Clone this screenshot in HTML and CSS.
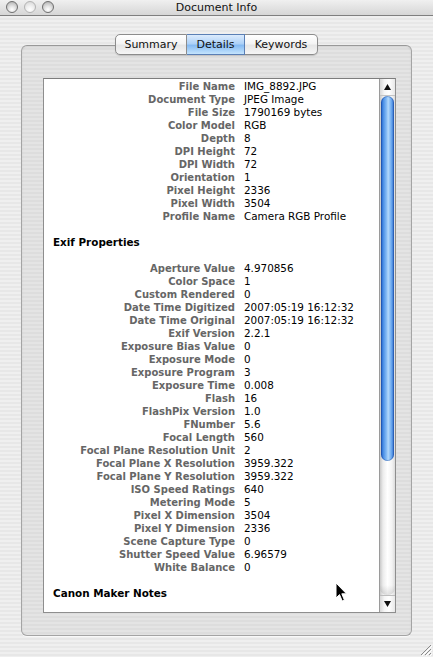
FILE: index.html
```html
<!DOCTYPE html>
<html>
<head>
<meta charset="utf-8">
<title>Document Info</title>
<link rel="stylesheet" href="styles.css">
</head>
<body>
<div class="window">
  <div class="titlebar">
    <div class="lights">
      <span class="light"></span>
      <span class="light off"></span>
      <span class="light"></span>
    </div>
    <div class="title">Document Info</div>
  </div>
  <div class="body">
    <div class="tabs">
      <span class="tab first">Summary</span>
      <span class="tab selected">Details</span>
      <span class="tab last">Keywords</span>
    </div>
    <div class="panel">
      <div class="listbox">
        <div class="content">
          <div class="props">
            <div class="k">File Name</div><div class="v">IMG_8892.JPG</div>
            <div class="k">Document Type</div><div class="v">JPEG Image</div>
            <div class="k">File Size</div><div class="v">1790169 bytes</div>
            <div class="k">Color Model</div><div class="v">RGB</div>
            <div class="k">Depth</div><div class="v">8</div>
            <div class="k">DPI Height</div><div class="v">72</div>
            <div class="k">DPI Width</div><div class="v">72</div>
            <div class="k">Orientation</div><div class="v">1</div>
            <div class="k">Pixel Height</div><div class="v">2336</div>
            <div class="k">Pixel Width</div><div class="v">3504</div>
            <div class="k">Profile Name</div><div class="v">Camera RGB Profile</div>
          </div>
          <div class="section">Exif Properties</div>
          <div class="props">
            <div class="k">Aperture Value</div><div class="v">4.970856</div>
            <div class="k">Color Space</div><div class="v">1</div>
            <div class="k">Custom Rendered</div><div class="v">0</div>
            <div class="k">Date Time Digitized</div><div class="v">2007:05:19 16:12:32</div>
            <div class="k">Date Time Original</div><div class="v">2007:05:19 16:12:32</div>
            <div class="k">Exif Version</div><div class="v">2.2.1</div>
            <div class="k">Exposure Bias Value</div><div class="v">0</div>
            <div class="k">Exposure Mode</div><div class="v">0</div>
            <div class="k">Exposure Program</div><div class="v">3</div>
            <div class="k">Exposure Time</div><div class="v">0.008</div>
            <div class="k">Flash</div><div class="v">16</div>
            <div class="k">FlashPix Version</div><div class="v">1.0</div>
            <div class="k">FNumber</div><div class="v">5.6</div>
            <div class="k">Focal Length</div><div class="v">560</div>
            <div class="k">Focal Plane Resolution Unit</div><div class="v">2</div>
            <div class="k">Focal Plane X Resolution</div><div class="v">3959.322</div>
            <div class="k">Focal Plane Y Resolution</div><div class="v">3959.322</div>
            <div class="k">ISO Speed Ratings</div><div class="v">640</div>
            <div class="k">Metering Mode</div><div class="v">5</div>
            <div class="k">Pixel X Dimension</div><div class="v">3504</div>
            <div class="k">Pixel Y Dimension</div><div class="v">2336</div>
            <div class="k">Scene Capture Type</div><div class="v">0</div>
            <div class="k">Shutter Speed Value</div><div class="v">6.96579</div>
            <div class="k">White Balance</div><div class="v">0</div>
          </div>
          <div class="section">Canon Maker Notes</div>
        </div>
        <div class="scrollbar">
          <div class="arrow up"><svg width="7" height="6" viewBox="0 0 7 6"><path d="M3.5 0 L7 6 L0 6 Z" fill="#111"/></svg></div>
          <div class="thumb"></div>
          <div class="track"></div>
          <div class="arrow down"><svg width="7" height="6" viewBox="0 0 7 6"><path d="M0 0 L7 0 L3.5 6 Z" fill="#111"/></svg></div>
        </div>
      </div>
    </div>
  </div>
  <svg class="grip" width="12" height="12" viewBox="0 0 12 12">
    <path d="M11 1 L1 11 M11 5 L5 11 M11 9 L9 11" stroke="#8a8a8a" stroke-width="1"/>
    <path d="M12 2 L2 12 M12 6 L6 12 M12 10 L10 12" stroke="#fff" stroke-width="1"/>
  </svg>
  <svg class="cursor" width="13" height="21" viewBox="0 0 13 21">
    <path d="M1 1 L1 16 L4.5 12.6 L7.2 19 L9.4 18 L6.8 11.8 L11.5 11.8 Z" fill="#000" stroke="#fff" stroke-width="1" stroke-linejoin="round"/>
  </svg>
</div>
</body>
</html>
```

FILE: styles.css
```css
html, body {
  margin: 0;
  padding: 0;
}
body {
  width: 433px;
  height: 657px;
  overflow: hidden;
  font-family: "DejaVu Sans", "Liberation Sans", sans-serif;
}
.window {
  position: relative;
  width: 433px;
  height: 657px;
  display: flex;
  flex-direction: column;
  background: repeating-linear-gradient(to bottom, #efefef 0 2px, #e7e7e7 2px 4px);
}
.titlebar {
  height: 15px;
  border-bottom: 1px solid #7f7f7f;
  background: linear-gradient(to bottom, #f0f0f0, #d6d6d6);
  position: relative;
  display: flex;
  align-items: center;
  justify-content: center;
}
.lights {
  position: absolute;
  left: 6px;
  top: 1px;
  display: flex;
  gap: 6px;
}
.light {
  width: 10px;
  height: 10px;
  border-radius: 50%;
  border: 1px solid #6f6f6f;
  background: radial-gradient(circle at 50% 75%, #ffffff 0, #e6e6e6 35%, #a9a9a9 100%);
}
.light.off {
  border-color: #b3b3b3;
  background: radial-gradient(circle at 50% 75%, #ffffff 0, #f0f0f0 40%, #d2d2d2 100%);
}
.title {
  font-size: 11px;
  color: #111;
  line-height: 15px;
}
.body {
  flex: 1;
  display: flex;
  flex-direction: column;
  align-items: center;
  padding-top: 18px;
}
.tabs {
  display: flex;
  height: 21px;
  position: relative;
  z-index: 2;
  margin-bottom: -10px;
  font-size: 11px;
  box-shadow: 0 1px 1px rgba(0,0,0,0.15);
  border-radius: 5px;
}
.tab {
  display: flex;
  align-items: center;
  justify-content: center;
  height: 19px;
  border: 1px solid #8c8c8c;
  border-left: none;
  background: linear-gradient(to bottom, #ffffff 0, #f4f4f4 45%, #e6e6e6 55%, #f6f6f6 100%);
  color: #111;
}
.tab.first {
  width: 70px;
  border-left: 1px solid #8c8c8c;
  border-radius: 5px 0 0 5px;
}
.tab.selected {
  width: 57px;
  border-color: #5a7fb5;
  background: linear-gradient(to bottom, #dcebfc 0, #aed2f8 45%, #86bbf3 55%, #c4e4fd 100%);
}
.tab.last {
  width: 72px;
  border-radius: 0 5px 5px 0;
}
.panel {
  box-sizing: border-box;
  width: 391px;
  height: 591px;
  border: 1px solid #a4a4a4;
  border-top-color: #999;
  border-radius: 6px;
  background: repeating-linear-gradient(to bottom, #e4e4e4 0 2px, #dddddd 2px 4px);
  box-shadow: inset 0 1px 2px rgba(0,0,0,0.08), 0 1px 0 rgba(255,255,255,0.6);
  padding: 32px 15px 0 21px;
}
.listbox {
  box-sizing: border-box;
  width: 353px;
  height: 535px;
  border: 1px solid #8e8e8e;
  border-top-color: #7d7d7d;
  background: #fff;
  display: flex;
  overflow: hidden;
}
.content {
  flex: 1;
  padding-top: 1px;
  font-size: 10.4px;
  line-height: 13px;
}
.props {
  display: grid;
  grid-template-columns: 191px 1fr;
  column-gap: 9px;
}
.k {
  text-align: right;
  font-weight: bold;
  font-size: 10px;
  color: #666;
  white-space: nowrap;
}
.v {
  color: #000;
  white-space: nowrap;
}
.section {
  font-weight: bold;
  font-size: 10.4px;
  color: #000;
  padding-left: 9px;
  margin: 13px 0;
}
.scrollbar {
  width: 15px;
  border-left: 1px solid #9a9a9a;
  display: flex;
  flex-direction: column;
  background: linear-gradient(to right, #c9c9c9 0, #ececec 20%, #ffffff 50%, #f3f3f3 80%, #dcdcdc 100%);
}
.arrow {
  height: 16px;
  display: flex;
  align-items: center;
  justify-content: center;
  background: linear-gradient(to right, #d8d8d8 0, #f6f6f6 30%, #ffffff 60%, #e8e8e8 100%);
}
.arrow.up {
  border-bottom: 1px solid #c4c4c4;
}
.arrow.down {
  border-top: 1px solid #bdbdbd;
}
.thumb {
  height: 365px;
  margin: 0 1px;
  border-radius: 7px;
  background: linear-gradient(to right, #1d5cc2 0, #4a8fe6 18%, #8cc0f6 45%, #b4d9fb 55%, #6aa8ef 80%, #2b68c9 100%);
  box-shadow: inset 0 0 0 1px rgba(20,60,140,0.35);
}
.track {
  flex: 1;
  background: linear-gradient(to bottom, rgba(0,0,0,0) 0, rgba(0,0,0,0) calc(100% - 10px), rgba(0,0,0,0.12) 100%);
  border-radius: 0 0 7px 7px;
}
.grip {
  position: absolute;
  right: 1px;
  bottom: 1px;
}
.cursor {
  position: absolute;
  left: 335px;
  top: 582px;
}
```
